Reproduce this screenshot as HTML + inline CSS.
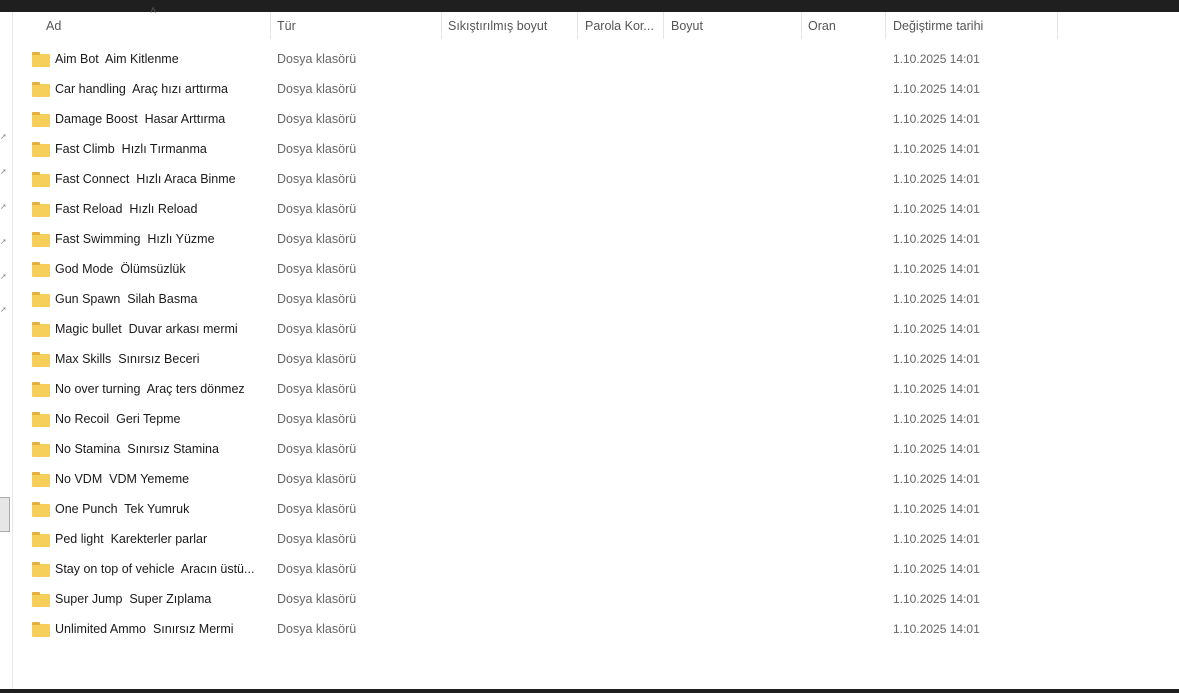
<!DOCTYPE html>
<html><head><meta charset="utf-8"><style>
body{margin:0;width:1179px;height:693px;background:#fff;position:relative;overflow:hidden;font-family:"Segoe UI","Liberation Sans",sans-serif;font-size:12.5px;color:#1a1a1a}
.top{position:absolute;left:0;top:0;width:1179px;height:12px;background:#1f1f1f}
.bot{position:absolute;left:0;top:689px;width:1179px;height:4px;background:#1f1f1f}
.lb{position:absolute;left:12px;top:12px;width:1px;height:677px;background:#e8e8e8}
.gb{position:absolute;left:0;top:497px;width:9px;height:33px;background:#e6e6e6;border:1px solid #aaa;border-left:none}
.h{position:absolute;top:19px;color:#555;font-size:12.5px}
.sep{position:absolute;top:12px;width:1px;height:27px;background:#e5e5e5}
.r{position:absolute;left:0;height:20px;width:1179px}
.f{position:absolute;left:32px;top:2px;width:18px;height:13px;background:#f6cf5a;border-radius:1px}
.f:before{content:"";position:absolute;left:0;top:-2px;width:8px;height:3px;background:#e3b13d;border-radius:1px 1px 0 0}
.n{position:absolute;left:55px;top:0}
.t{position:absolute;left:277px;top:0;color:#666}
.d{position:absolute;left:893px;top:0;color:#666;font-size:12px}
.ar{position:absolute;left:0;width:5px;height:5px;color:#888;font-size:8px}
</style></head><body>
<div class="top"></div><div class="bot"></div><div class="lb"></div><div class="gb"></div>
<div style="position:absolute;left:150px;top:5px;color:#555;font-size:11px">˄</div>
<div class="h" style="left:46px">Ad</div>
<div class="h" style="left:277px">Tür</div>
<div class="h" style="left:448px">Sıkıştırılmış boyut</div>
<div class="h" style="left:585px">Parola Kor...</div>
<div class="h" style="left:671px">Boyut</div>
<div class="h" style="left:808px">Oran</div>
<div class="h" style="left:893px">Değiştirme tarihi</div>
<div class="sep" style="left:270px"></div><div class="sep" style="left:441px"></div><div class="sep" style="left:577px"></div><div class="sep" style="left:663px"></div><div class="sep" style="left:801px"></div><div class="sep" style="left:885px"></div><div class="sep" style="left:1057px"></div>
<div class="r" style="top:52px"><div class="f"></div><div class="n">Aim Bot&nbsp; Aim Kitlenme</div><div class="t">Dosya klasörü</div><div class="d">1.10.2025 14:01</div></div>
<div class="r" style="top:82px"><div class="f"></div><div class="n">Car handling&nbsp; Araç hızı arttırma</div><div class="t">Dosya klasörü</div><div class="d">1.10.2025 14:01</div></div>
<div class="r" style="top:112px"><div class="f"></div><div class="n">Damage Boost&nbsp; Hasar Arttırma</div><div class="t">Dosya klasörü</div><div class="d">1.10.2025 14:01</div></div>
<div class="r" style="top:142px"><div class="f"></div><div class="n">Fast Climb&nbsp; Hızlı Tırmanma</div><div class="t">Dosya klasörü</div><div class="d">1.10.2025 14:01</div></div>
<div class="r" style="top:172px"><div class="f"></div><div class="n">Fast Connect&nbsp; Hızlı Araca Binme</div><div class="t">Dosya klasörü</div><div class="d">1.10.2025 14:01</div></div>
<div class="r" style="top:202px"><div class="f"></div><div class="n">Fast Reload&nbsp; Hızlı Reload</div><div class="t">Dosya klasörü</div><div class="d">1.10.2025 14:01</div></div>
<div class="r" style="top:232px"><div class="f"></div><div class="n">Fast Swimming&nbsp; Hızlı Yüzme</div><div class="t">Dosya klasörü</div><div class="d">1.10.2025 14:01</div></div>
<div class="r" style="top:262px"><div class="f"></div><div class="n">God Mode&nbsp; Ölümsüzlük</div><div class="t">Dosya klasörü</div><div class="d">1.10.2025 14:01</div></div>
<div class="r" style="top:292px"><div class="f"></div><div class="n">Gun Spawn&nbsp; Silah Basma</div><div class="t">Dosya klasörü</div><div class="d">1.10.2025 14:01</div></div>
<div class="r" style="top:322px"><div class="f"></div><div class="n">Magic bullet&nbsp; Duvar arkası mermi</div><div class="t">Dosya klasörü</div><div class="d">1.10.2025 14:01</div></div>
<div class="r" style="top:352px"><div class="f"></div><div class="n">Max Skills&nbsp; Sınırsız Beceri</div><div class="t">Dosya klasörü</div><div class="d">1.10.2025 14:01</div></div>
<div class="r" style="top:382px"><div class="f"></div><div class="n">No over turning&nbsp; Araç ters dönmez</div><div class="t">Dosya klasörü</div><div class="d">1.10.2025 14:01</div></div>
<div class="r" style="top:412px"><div class="f"></div><div class="n">No Recoil&nbsp; Geri Tepme</div><div class="t">Dosya klasörü</div><div class="d">1.10.2025 14:01</div></div>
<div class="r" style="top:442px"><div class="f"></div><div class="n">No Stamina&nbsp; Sınırsız Stamina</div><div class="t">Dosya klasörü</div><div class="d">1.10.2025 14:01</div></div>
<div class="r" style="top:472px"><div class="f"></div><div class="n">No VDM&nbsp; VDM Yememe</div><div class="t">Dosya klasörü</div><div class="d">1.10.2025 14:01</div></div>
<div class="r" style="top:502px"><div class="f"></div><div class="n">One Punch&nbsp; Tek Yumruk</div><div class="t">Dosya klasörü</div><div class="d">1.10.2025 14:01</div></div>
<div class="r" style="top:532px"><div class="f"></div><div class="n">Ped light&nbsp; Karekterler parlar</div><div class="t">Dosya klasörü</div><div class="d">1.10.2025 14:01</div></div>
<div class="r" style="top:562px"><div class="f"></div><div class="n">Stay on top of vehicle&nbsp; Aracın üstü...</div><div class="t">Dosya klasörü</div><div class="d">1.10.2025 14:01</div></div>
<div class="r" style="top:592px"><div class="f"></div><div class="n">Super Jump&nbsp; Super Zıplama</div><div class="t">Dosya klasörü</div><div class="d">1.10.2025 14:01</div></div>
<div class="r" style="top:622px"><div class="f"></div><div class="n">Unlimited Ammo&nbsp; Sınırsız Mermi</div><div class="t">Dosya klasörü</div><div class="d">1.10.2025 14:01</div></div>
<div class="ar" style="top:132px">➚</div><div class="ar" style="top:167px">➚</div><div class="ar" style="top:202px">➚</div><div class="ar" style="top:237px">➚</div><div class="ar" style="top:272px">➚</div><div class="ar" style="top:305px">➚</div>
</body></html>
